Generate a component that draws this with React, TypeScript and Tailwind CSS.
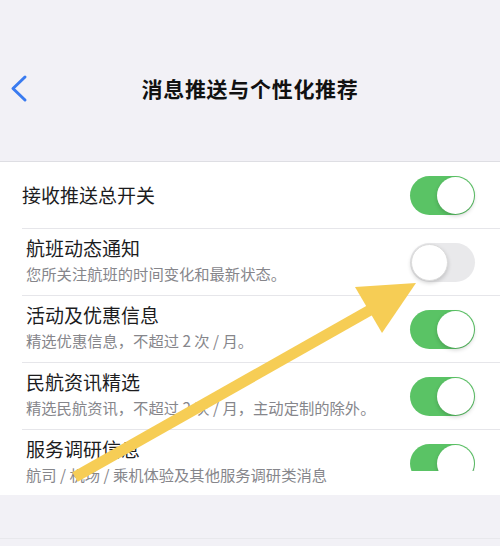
import React from 'react'

type Row = {
  title: string
  desc?: string
  on: boolean
  clip?: boolean
}

const rows: Row[] = [
  { title: '接收推送总开关', on: true },
  { title: '航班动态通知', desc: '您所关注航班的时间变化和最新状态。', on: false },
  { title: '活动及优惠信息', desc: '精选优惠信息，不超过 2 次 / 月。', on: true },
  { title: '民航资讯精选', desc: '精选民航资讯，不超过 2 次 / 月，主动定制的除外。', on: true },
  { title: '服务调研信息', desc: '航司 / 机场 / 乘机体验及其他服务调研类消息', on: true, clip: true },
]

function Toggle({ on }: { on: boolean }) {
  return (
    <div
      className={`relative w-[65px] h-[39px] rounded-full ${
        on ? 'bg-[#5ac365]' : 'bg-[#e9e9eb]'
      }`}
    >
      <div
        className={`absolute top-[1px] w-[37px] h-[37px] rounded-full bg-white shadow-[0_2px_4px_rgba(0,0,0,0.18)] ${
          on ? 'right-[1px]' : 'left-[1px] border border-[#dcdcdc]'
        }`}
      />
    </div>
  )
}

export default function App() {
  return (
    <div
      className="relative w-[500px] h-[546px] overflow-hidden bg-[#f2f1f6]"
      style={{ fontFamily: '"Noto Sans CJK SC", "Noto Sans", sans-serif' }}
    >
      {/* 顶部导航 */}
      <div className="relative h-[161px]">
        <div className="flex items-center justify-center pt-[73px]">
          <span className="text-[21px] font-bold text-[#111] tracking-[0.7px]">消息推送与个性化推荐</span>
        </div>
        <svg className="absolute left-[10px] top-[74px]" width="20" height="30" viewBox="0 0 20 30">
          <path d="M15 3 L3 14.5 L15 26" fill="none" stroke="#3a7bf0" strokeWidth="3" strokeLinecap="round" strokeLinejoin="round" />
        </svg>
      </div>

      {/* 设置列表 */}
      <div className="bg-white border-t border-[#dedee3] h-[334px]">
        {rows.map((row, idx) => (
          <div key={idx}>
            {idx > 0 && <div className="ml-[22px] h-px bg-[#e6e6ea]" />}
            <div
              className={`flex items-center justify-between h-[66px] pr-[25px] ${
                idx === 0 ? 'pl-[22px]' : 'pl-[26px]'
              }`}
            >
              <div className={`flex flex-col ${row.desc ? 'mb-[5px]' : ''}`}>
                <span className="text-[19px] leading-[26px] text-[#1c1c1e]">{row.title}</span>
                {row.desc && (
                  <span className="text-[15.3px] leading-[24px] text-[#86868b]">{row.desc}</span>
                )}
              </div>
              {row.clip ? (
                <div className="h-[39px]">
                  <div className="h-[27px] overflow-hidden">
                    <Toggle on={row.on} />
                  </div>
                </div>
              ) : (
                <Toggle on={row.on} />
              )}
            </div>
          </div>
        ))}
      </div>

      <div className="absolute left-0 right-0 top-[538px] h-px bg-[#e8e8ec]" />

      {/* 黄色箭头 */}
      <svg className="absolute left-0 top-0 pointer-events-none" width="500" height="546" viewBox="0 0 500 546">
        <line x1="75" y1="477" x2="372" y2="309" stroke="#f6cd55" strokeWidth="11" />
        <polygon points="355,287 416,283 382,333" fill="#f6cd55" />
      </svg>
    </div>
  )
}
